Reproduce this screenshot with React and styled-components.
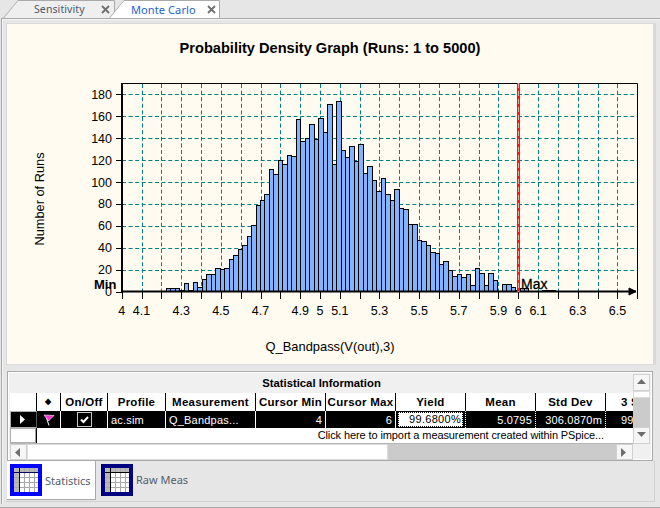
import styled, { createGlobalStyle } from "styled-components";

const GlobalStyle = createGlobalStyle`
  html, body { margin: 0; padding: 0; background: #e6e6e6; }
  * { box-sizing: border-box; }
`;

/////////////////// DATA
const BAR_START = 166;
const BAR_W = 4.475;
const counts = [
  3, 3, 3, 2, 8, 2, 9, 4, 12, 16, 16, 22, 21, 22, 30, 33, 39, 43, 51, 61, 79, 84, 89, 111.5, 107, 120,
  116, 125, 124, 157, 137, 140, 152.6, 139, 158, 146, 171, 116, 174, 129, 123, 133, 119, 135, 108, 115,
  102, 92, 104, 89, 84, 94, 76, 75, 62, 62, 47, 46, 42.5, 36, 35, 25, 28, 19.5, 14, 16, 13, 16, 6, 22,
  17, 6, 17, 11, 1, 7, 7, 4, 1.5, 3, 3, 0.5, 1, 0, 2, 2, 2, 0, 0, 1, 0, 0, 0, 0, 0, 0, 0, 0, 0, 0, 1,
];
const xTicks = Array.from({ length: 27 }, (_, i) => Math.round(121.7 + 19.83 * i) + 0.5);
const xLabels = [
  ["4", 0], ["4.1", 1], ["4.3", 3], ["4.5", 5], ["4.7", 7], ["4.9", 9], ["5", 10], ["5.1", 11],
  ["5.3", 13], ["5.5", 15], ["5.7", 17], ["5.9", 19], ["6", 20], ["6.1", 21], ["6.3", 23], ["6.5", 25],
];
const yTicks = [0, 20, 40, 60, 80, 100, 120, 140, 160, 180];
const toY = (v) => 291.7 - v * 1.097;

const columns = [
  { label: "", width: 27 },
  { label: "◆", width: 24 },
  { label: "On/Off", width: 47 },
  { label: "Profile", width: 58 },
  { label: "Measurement", width: 90 },
  { label: "Cursor Min", width: 70 },
  { label: "Cursor Max", width: 70 },
  { label: "Yield", width: 70 },
  { label: "Mean", width: 70 },
  { label: "Std Dev", width: 70 },
  { label: "3 Sigma", width: 70, indent: 15 },
];
const gridCols = columns.map((c) => c.width + "px").join(" ");

/////////////////// STYLED COMPONENTS
const Page = styled.div`
  width: 660px;
  height: 508px;
  overflow: hidden;
  display: flex;
  flex-direction: column;
  background: #e6e6e6;
  font-family: "Liberation Sans", Arial, sans-serif;
`;

const TabStrip = styled.div`
  height: 18px;
  display: flex;
  align-items: flex-end;
  padding-left: 3px;
  flex-shrink: 0;
`;

const TopTab = styled.div`
  position: relative;
  height: 18px;
  width: ${(p) => p.$width}px;
  margin-left: ${(p) => p.$overlap || 0}px;
  z-index: ${(p) => (p.$active ? 2 : 1)};
  background: #a9a9a9;
  clip-path: polygon(15px 0, calc(100% - 1px) 0, 100% 1px, 100% 100%, 0 100%);

  &::after {
    content: "";
    position: absolute;
    inset: 1px 1px 0 1px;
    background: ${(p) => (p.$active ? "#ffffff" : "#efefef")};
    clip-path: polygon(14px 0, 100% 0, 100% 100%, 0 100%);
  }
`;

const TabInner = styled.div`
  position: relative;
  z-index: 1;
  height: 100%;
  display: flex;
  align-items: center;
  padding-left: ${(p) => p.$pad}px;
  font-family: "Noto Sans", sans-serif;
  font-size: ${(p) => (p.$active ? "11px" : "10.5px")};
  letter-spacing: 0.1px;
  color: ${(p) => (p.$active ? "#1a63d0" : "#4d5766")};
`;

const CloseMark = styled.span`
  position: absolute;
  z-index: 1;
  right: ${(p) => p.$right}px;
  top: 5px;
  line-height: 0;
`;

const Body = styled.div`
  flex: 1;
  display: flex;
  flex-direction: column;
  margin-left: 1px;
  border-top: 1px solid #a9a9a9;
  border-left: 1px solid #a9a9a9;
  box-shadow: inset 1px 1px 0 #f4f4f4;
  padding: 4px 4px 0 4px;
`;

const ChartPanel = styled.section`
  height: 342px;
  display: flex;
  flex-direction: column;
  align-items: center;
  background: #fffbf0;
  border: 1px solid #d9d9d9;
  border-right-width: 3px;
  padding-top: 16px;
`;

const ChartTitle = styled.h1`
  margin: 0;
  font-size: 14.6px;
  line-height: 17px;
  font-weight: bold;
  color: #000;
`;

const ChartSvg = styled.svg`
  display: block;
  width: 648px;
  height: 270px;
  margin-top: 5px;
  flex-shrink: 0;
`;

const XLabel = styled.div`
  font-size: 12.9px;
  line-height: 15px;
  margin-top: 7px;
  color: #000;
`;

const StatsFrame = styled.div`
  margin: 6px 3px 0 1px;
  height: 90px;
  background: #f0f0f0;
  border: 1px solid #a9a9a9;
  box-shadow: inset 0 0 0 1px #fff;
  padding: 2px 2px 2px 2px;
  display: grid;
  grid-template-columns: 623px 17px;
  grid-template-rows: 70px 16px;
`;

const TableView = styled.div`
  overflow: hidden;
  background: #fff;
  font-size: 11px;
`;

const TableTitle = styled.div`
  height: 19px;
  background: #f0f0f0;
  text-align: center;
  font-weight: bold;
  font-size: 11.3px;
  line-height: 19px;
  width: 623px;
  color: #000;
`;

const Row = styled.div`
  display: grid;
  grid-template-columns: ${gridCols};
  width: max-content;
  height: ${(p) => p.$height}px;
`;

const HeadCell = styled.div`
  background: #fff;
  border-right: 1px solid #000;
  font-weight: bold;
  letter-spacing: 0.25px;
  line-height: 18px;
  text-align: ${(p) => (p.$indent ? "left" : "center")};
  padding-left: ${(p) => p.$indent || 0}px;
  white-space: nowrap;
  overflow: hidden;
  font-size: ${(p) => (p.$small ? "8px" : "11.5px")};
`;

const DataCell = styled.div`
  background: #000;
  color: #fff;
  border-right: 1px ${(p) => (p.$dotted ? "dotted" : "solid")} #fff;
  display: flex;
  align-items: center;
  justify-content: ${(p) => p.$justify || "flex-start"};
  padding: 0 3px 0 ${(p) => p.$indent || 3}px;
  line-height: 16px;
  letter-spacing: 0.2px;
  white-space: nowrap;
  overflow: hidden;
`;

const YieldCell = styled(DataCell)`
  padding: 1px 2px;
`;

const YieldBox = styled.span`
  flex: 1;
  background: #fff;
  color: #000;
  text-align: right;
  padding-right: 1px;
  border: 1px dotted #000;
  line-height: 13px;
  letter-spacing: 0.3px;
`;

const RowHeader = styled.div`
  background: ${(p) => (p.$current ? "#000" : "#fff")};
  border: 1px solid #b0b0b0;
  border-right-color: ${(p) => (p.$current ? "#555" : "#a0a0a0")};
  display: flex;
  align-items: center;
  justify-content: center;
  height: 100%;
`;

const ImportRow = styled.div`
  display: grid;
  grid-template-columns: 26px 1fr;
  height: 16px;
  border-bottom: 1px solid #b5b5b5;
`;

const ImportText = styled.div`
  text-align: right;
  line-height: 15px;
  padding-right: 29px;
  letter-spacing: -0.1px;
  color: #000;
  border-left: 1px solid #000;
`;

const VScroll = styled.div`
  display: grid;
  grid-template-rows: 17px 7px 1fr 17px;
  gap: 0;
  background: #cbcbcb;
`;

const HScroll = styled.div`
  display: grid;
  grid-template-columns: 17px 361px 1fr 17px;
  background: #cbcbcb;
`;

const ScrollButton = styled.div`
  background: #f6f6f6;
  border: 1px solid #d0d0d0;
  display: flex;
  align-items: center;
  justify-content: center;
`;

const ScrollThumb = styled.div`
  background: #fff;
  border: 1px solid #dcdcdc;
`;

const BottomTabs = styled.div`
  flex: 1;
  margin: 0 1px 0 0;
  display: flex;
  border-bottom: 1px solid #d0d0d0;
  border-right: 1px solid #d0d0d0;
  height: 39px;
  max-height: 41px;
  padding-left: 1px;
`;

const SheetTab = styled.div`
  display: flex;
  align-items: center;
  gap: 3px;
  height: ${(p) => (p.$active ? "39px" : "38px")};
  width: ${(p) => p.$width}px;
  padding: ${(p) => (p.$active ? "0 0 0 3px" : "0 0 0 5px")};
  background: ${(p) => (p.$active ? "#fff" : "transparent")};
  border-right: 1px solid ${(p) => (p.$active ? "#a9a9a9" : "transparent")};
  border-bottom: 1px solid ${(p) => (p.$active ? "#a9a9a9" : "transparent")};
  font-family: "Noto Sans", sans-serif;
  font-size: 11px;
  color: #555d6b;
`;

const OuterEdge = styled.div`
  height: 4px;
  flex-shrink: 0;
  margin: 0;
  border-bottom: 1px solid #a9a9a9;
`;

/////////////////// ICONS
const CloseIcon = () => (
  <svg width="9" height="9" viewBox="0 0 9 9">
    <path d="M1 1 L8 8 M8 1 L1 8" stroke="#6f6f6f" strokeWidth="1.8" />
  </svg>
);

const Triangle = ({ dir, color = "#6e6e6e" }) => {
  const d = {
    up: "M4.5 1 L9 6 L0 6 Z",
    down: "M0 1 L9 1 L4.5 6 Z",
    left: "M6 0 L6 9 L1 4.5 Z",
    right: "M1 0 L1 9 L6 4.5 Z",
  }[dir];
  return (
    <svg width="9" height="9" viewBox="0 0 9 9">
      <path d={d} fill={color} />
    </svg>
  );
};

const SheetIcon = ({ color, dark }) => (
  <svg width="32" height="32" viewBox="0 0 32 32">
    <rect width="32" height="32" fill={color} />
    <rect x="4" y="4" width="24" height="24" fill="#fff" />
    <rect x="4" y="4" width="24" height="4" fill="#b8b8b8" />
    <rect x="4" y="8" width="5" height="20" fill="#b8b8b8" />
    {[13, 18, 23].map((y) => (
      <path key={y} d={`M4 ${y}.5 H28`} stroke="#a8a8a8" />
    ))}
    {[14, 19, 24].map((x) => (
      <path key={x} d={`M${x}.5 4 V28`} stroke="#a8a8a8" />
    ))}
    <path d="M4 8.5 H28 M9.5 4 V28" stroke={dark} />
  </svg>
);

const FlagIcon = () => (
  <svg width="12" height="12" viewBox="0 0 12 12">
    <path d="M3.5 4 L6 11.5" stroke="#fff" strokeWidth="1" fill="none" />
    <path d="M1 1 L11 1.5 L5.5 7 Z" fill="#ff2fd6" stroke="#fff" strokeWidth="0.6" />
  </svg>
);

const CheckBox = () => (
  <svg width="15" height="15" viewBox="0 0 15 15">
    <rect x="0.5" y="0.5" width="14" height="14" fill="#000" stroke="#c8c8c8" />
    <path d="M4 7.5 L6.5 10 L11 5" fill="none" stroke="#fff" strokeWidth="2" />
  </svg>
);

/////////////////// CHART
function Histogram() {
  return (
    <ChartSvg viewBox="6 62 648 270">
      <text
        x="44"
        y="199"
        transform="rotate(-90 44 199)"
        textAnchor="middle"
        fontSize="12.8"
        fontFamily="Liberation Sans"
      >
        Number of Runs
      </text>

      {yTicks.slice(1).map((v) => (
        <path
          key={v}
          d={`M122 ${Math.round(toY(v)) + 0.5} H637`}
          stroke="#008080"
          strokeDasharray="4 2.6"
          fill="none"
        />
      ))}
      {xTicks.slice(1, 26).map((x) => (
        <path key={x} d={`M${x} 84 V291`} stroke="#008080" strokeDasharray="4 2.6" fill="none" />
      ))}

      {counts.map((c, i) => {
        if (c <= 0) return null;
        const left = Math.round(BAR_START + i * BAR_W) + 0.5;
        const right = Math.round(BAR_START + (i + 1) * BAR_W) + 0.5;
        const top = Math.round(toY(c)) + 0.5;
        return (
          <rect
            key={i}
            x={left}
            y={top}
            width={right - left}
            height={291.5 - top}
            fill="#80b4ff"
            stroke="#000"
            strokeWidth="1"
          />
        );
      })}

      <path d="M121 83.5 H637.5 V299" stroke="#000" fill="none" />
      <path d="M122 83 V292" stroke="#000" strokeWidth="2" fill="none" />
      <path d="M121 291.5 H636" stroke="#000" strokeWidth="2" fill="none" />
      <path d="M629 288 L636 291.5 L629 295 Z" fill="#000" stroke="#000" />

      {xTicks.map((x) => (
        <path key={x} d={`M${x} 292 V299`} stroke="#000" fill="none" />
      ))}
      {yTicks.map((v) => (
        <path key={v} d={`M116 ${Math.round(toY(v)) + 0.5} H122`} stroke="#000" fill="none" />
      ))}

      {yTicks.map((v) => (
        <text
          key={v}
          x="112"
          y={toY(v) + 4.5}
          textAnchor="end"
          fontSize="12.5"
          fontFamily="Liberation Sans"
        >
          {v}
        </text>
      ))}
      {xLabels.map(([label, i]) => (
        <text
          key={label}
          x={121.7 + 19.83 * i}
          y="315"
          textAnchor="middle"
          fontSize="12.5"
          fontFamily="Liberation Sans"
        >
          {label}
        </text>
      ))}

      <path d="M518.5 83 V292" stroke="#f01c1c" strokeWidth="3" fill="none" />
      <path d="M518.5 83 V292" stroke="#ffc0c0" strokeWidth="0.8" strokeDasharray="5 3" fill="none" />

      <text x="94" y="289" fontSize="13" fontWeight="bold" fontFamily="Liberation Sans">
        Min
      </text>
      <text x="521" y="289" fontSize="14" fontFamily="Liberation Sans" stroke="#000" strokeWidth="0.3">
        Max
      </text>
    </ChartSvg>
  );
}

export default function App() {
  return (
    <>
      <GlobalStyle />
      <Page>
        <TabStrip>
          <TopTab $width={112}>
            <TabInner $pad={31}>Sensitivity</TabInner>
            <CloseMark $right={5}>
              <CloseIcon />
            </CloseMark>
          </TopTab>
          <TopTab $width={111} $overlap={-6} $active>
            <TabInner $pad={22} $active>
              Monte Carlo
            </TabInner>
            <CloseMark $right={4}>
              <CloseIcon />
            </CloseMark>
          </TopTab>
        </TabStrip>

        <Body>
          <ChartPanel>
            <ChartTitle>Probability Density Graph (Runs: 1 to 5000)</ChartTitle>
            <Histogram />
            <XLabel>Q_Bandpass(V(out),3)</XLabel>
          </ChartPanel>

          <StatsFrame>
            <TableView>
              <TableTitle>Statistical Information</TableTitle>
              <Row $height={18}>
                {columns.map((c, i) => (
                  <HeadCell key={i} $small={i === 1} $indent={c.indent}>
                    {c.label}
                  </HeadCell>
                ))}
              </Row>
              <Row $height={17}>
                <RowHeader $current>
                  <Triangle dir="right" color="#fff" />
                </RowHeader>
                <DataCell $justify="center">
                  <FlagIcon />
                </DataCell>
                <DataCell $justify="center">
                  <CheckBox />
                </DataCell>
                <DataCell>ac.sim</DataCell>
                <DataCell>Q_Bandpas...</DataCell>
                <DataCell $justify="flex-end">4</DataCell>
                <DataCell $justify="flex-end">6</DataCell>
                <YieldCell $dotted>
                  <YieldBox>99.6800%</YieldBox>
                </YieldCell>
                <DataCell $justify="flex-end" $dotted>
                  5.0795
                </DataCell>
                <DataCell $justify="flex-end" $dotted>
                  306.0870m
                </DataCell>
                <DataCell $indent={15}>99.9</DataCell>
              </Row>
              <ImportRow>
                <RowHeader />
                <ImportText>Click here to import a measurement created within PSpice...</ImportText>
              </ImportRow>
            </TableView>

            <VScroll>
              <ScrollButton>
                <Triangle dir="up" />
              </ScrollButton>
              <ScrollThumb />
              <span />
              <ScrollButton>
                <Triangle dir="down" />
              </ScrollButton>
            </VScroll>

            <HScroll>
              <ScrollButton>
                <Triangle dir="left" />
              </ScrollButton>
              <ScrollThumb />
              <span />
              <ScrollButton>
                <Triangle dir="right" />
              </ScrollButton>
            </HScroll>
          </StatsFrame>

          <BottomTabs>
            <SheetTab $active $width={89}>
              <SheetIcon color="#0000ff" dark="#000060" />
              Statistics
            </SheetTab>
            <SheetTab $width={100}>
              <SheetIcon color="#000080" dark="#000000" />
              Raw Meas
            </SheetTab>
          </BottomTabs>
        </Body>
        <OuterEdge />
      </Page>
    </>
  );
}
